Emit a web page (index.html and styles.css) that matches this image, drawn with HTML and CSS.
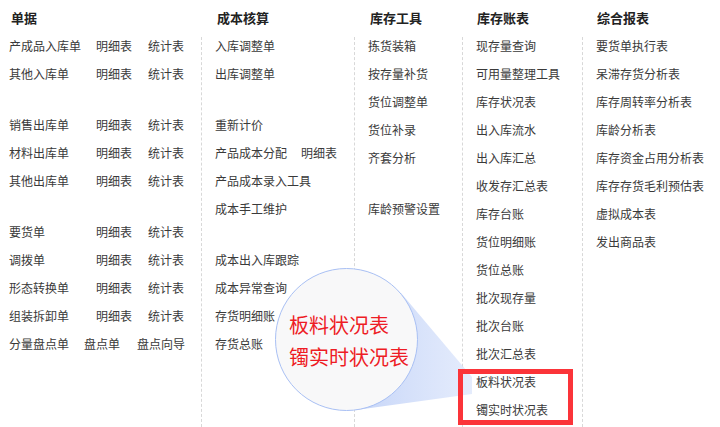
FILE: index.html
```html
<!DOCTYPE html>
<html lang="zh-CN">
<head>
<meta charset="utf-8">
<title>库存菜单</title>
<link rel="stylesheet" href="styles.css">
</head>
<body>
<div class="page">
  <div class="col col-doc">
    <div class="head">单据</div>
    <div class="list">
      <div class="row"><span class="c1">产成品入库单</span><span class="c2">明细表</span><span>统计表</span></div>
      <div class="row"><span class="c1">其他入库单</span><span class="c2">明细表</span><span>统计表</span></div>
      <div class="row gap"><span class="c1">销售出库单</span><span class="c2">明细表</span><span>统计表</span></div>
      <div class="row"><span class="c1">材料出库单</span><span class="c2">明细表</span><span>统计表</span></div>
      <div class="row"><span class="c1">其他出库单</span><span class="c2">明细表</span><span>统计表</span></div>
      <div class="row gap"><span class="c1">要货单</span><span class="c2">明细表</span><span>统计表</span></div>
      <div class="row"><span class="c1">调拨单</span><span class="c2">明细表</span><span>统计表</span></div>
      <div class="row"><span class="c1">形态转换单</span><span class="c2">明细表</span><span>统计表</span></div>
      <div class="row"><span class="c1">组装拆卸单</span><span class="c2">明细表</span><span>统计表</span></div>
      <div class="row"><span class="d1">分量盘点单</span><span class="d2">盘点单</span><span>盘点向导</span></div>
    </div>
  </div>
  <div class="col col-cost">
    <div class="head">成本核算</div>
    <div class="list">
      <div class="row">入库调整单</div>
      <div class="row">出库调整单</div>
      <div class="row gap">重新计价</div>
      <div class="row"><span>产品成本分配</span><span class="sub">明细表</span></div>
      <div class="row">产品成本录入工具</div>
      <div class="row">成本手工维护</div>
      <div class="row gap">成本出入库跟踪</div>
      <div class="row">成本异常查询</div>
      <div class="row">存货明细账</div>
      <div class="row">存货总账</div>
    </div>
  </div>
  <div class="col col-tool">
    <div class="head">库存工具</div>
    <div class="list">
      <div class="row">拣货装箱</div>
      <div class="row">按存量补货</div>
      <div class="row">货位调整单</div>
      <div class="row">货位补录</div>
      <div class="row">齐套分析</div>
      <div class="row gap">库龄预警设置</div>
    </div>
  </div>
  <div class="col col-acc">
    <div class="head">库存账表</div>
    <div class="list">
      <div class="row">现存量查询</div>
      <div class="row">可用量整理工具</div>
      <div class="row">库存状况表</div>
      <div class="row">出入库流水</div>
      <div class="row">出入库汇总</div>
      <div class="row">收发存汇总表</div>
      <div class="row">库存台账</div>
      <div class="row">货位明细账</div>
      <div class="row">货位总账</div>
      <div class="row">批次现存量</div>
      <div class="row">批次台账</div>
      <div class="row">批次汇总表</div>
      <div class="row">板料状况表</div>
      <div class="row">镯实时状况表</div>
    </div>
  </div>
  <div class="col col-rep">
    <div class="head">综合报表</div>
    <div class="list">
      <div class="row">要货单执行表</div>
      <div class="row">呆滞存货分析表</div>
      <div class="row">库存周转率分析表</div>
      <div class="row">库龄分析表</div>
      <div class="row">库存资金占用分析表</div>
      <div class="row">库存存货毛利预估表</div>
      <div class="row">虚拟成本表</div>
      <div class="row">发出商品表</div>
    </div>
  </div>
</div>
<svg class="cone" width="720" height="427" viewBox="0 0 720 427">
  <defs>
    <linearGradient id="coneFill" x1="0" y1="0" x2="1" y2="0">
      <stop offset="0" stop-color="#bfd0f7" stop-opacity="0.95"/>
      <stop offset="1" stop-color="#d3dffa" stop-opacity="0.6"/>
    </linearGradient>
  </defs>
  <polygon points="346,340 401,293 472,377 472,394 356,410" fill="url(#coneFill)"/>
</svg>
<div class="lens"><span>板料状况表</span><span>镯实时状况表</span></div>
<div class="mark"></div>
</body>
</html>
```

FILE: styles.css
```css
html, body {
  margin: 0;
  padding: 0;
}
body {
  width: 720px;
  height: 427px;
  overflow: hidden;
  background: #fff;
  position: relative;
  font-family: "Noto Sans CJK SC", "Noto Sans", sans-serif;
}
.page {
  display: flex;
  height: 427px;
}
.col {
  display: flex;
  flex-direction: column;
}
.col-doc { width: 201px; }
.col-cost { width: 153px; }
.col-tool { width: 108px; }
.col-acc { width: 120px; }
.col-rep { flex: 1; }

.head {
  height: 37px;
  flex: none;
  box-sizing: border-box;
  padding-top: 8px;
  padding-left: 16px;
  line-height: 20px;
  font-size: 13px;
  font-weight: bold;
  color: #222;
}
.col-doc .head { padding-left: 11px; }
.col-acc .head, .col-rep .head { padding-left: 15px; }

.list {
  flex: 1;
  display: flex;
  flex-direction: column;
  gap: 10px;
  padding-left: 13px;
  border-left: 1px dashed #d8d8d8;
  font-size: 12px;
  line-height: 18px;
  color: #3a3a3a;
}
.col-doc .list {
  border-left: none;
  padding-left: 9px;
}
.row {
  display: flex;
  height: 18px;
  white-space: nowrap;
}
.gap { margin-top: 23px; }
.c1 { width: 87px; }
.c2 { width: 52px; }
.d1 { width: 75px; }
.d2 { width: 53px; }
.sub { margin-left: 14px; }

.cone {
  position: absolute;
  left: 0;
  top: 0;
  pointer-events: none;
}
.lens {
  position: absolute;
  left: 275px;
  top: 268px;
  width: 143px;
  height: 143px;
  box-sizing: border-box;
  border-radius: 50%;
  border: 1px solid #a9c0f4;
  background: #f8f8f9;
  display: flex;
  flex-direction: column;
  justify-content: center;
  padding: 3px 0 0 13px;
  font-size: 20px;
  line-height: 32px;
  color: #ee1c25;
  white-space: nowrap;
}
.mark {
  position: absolute;
  left: 458px;
  top: 369px;
  width: 115px;
  height: 56px;
  box-sizing: border-box;
  border: 5px solid #fb3439;
}
```
